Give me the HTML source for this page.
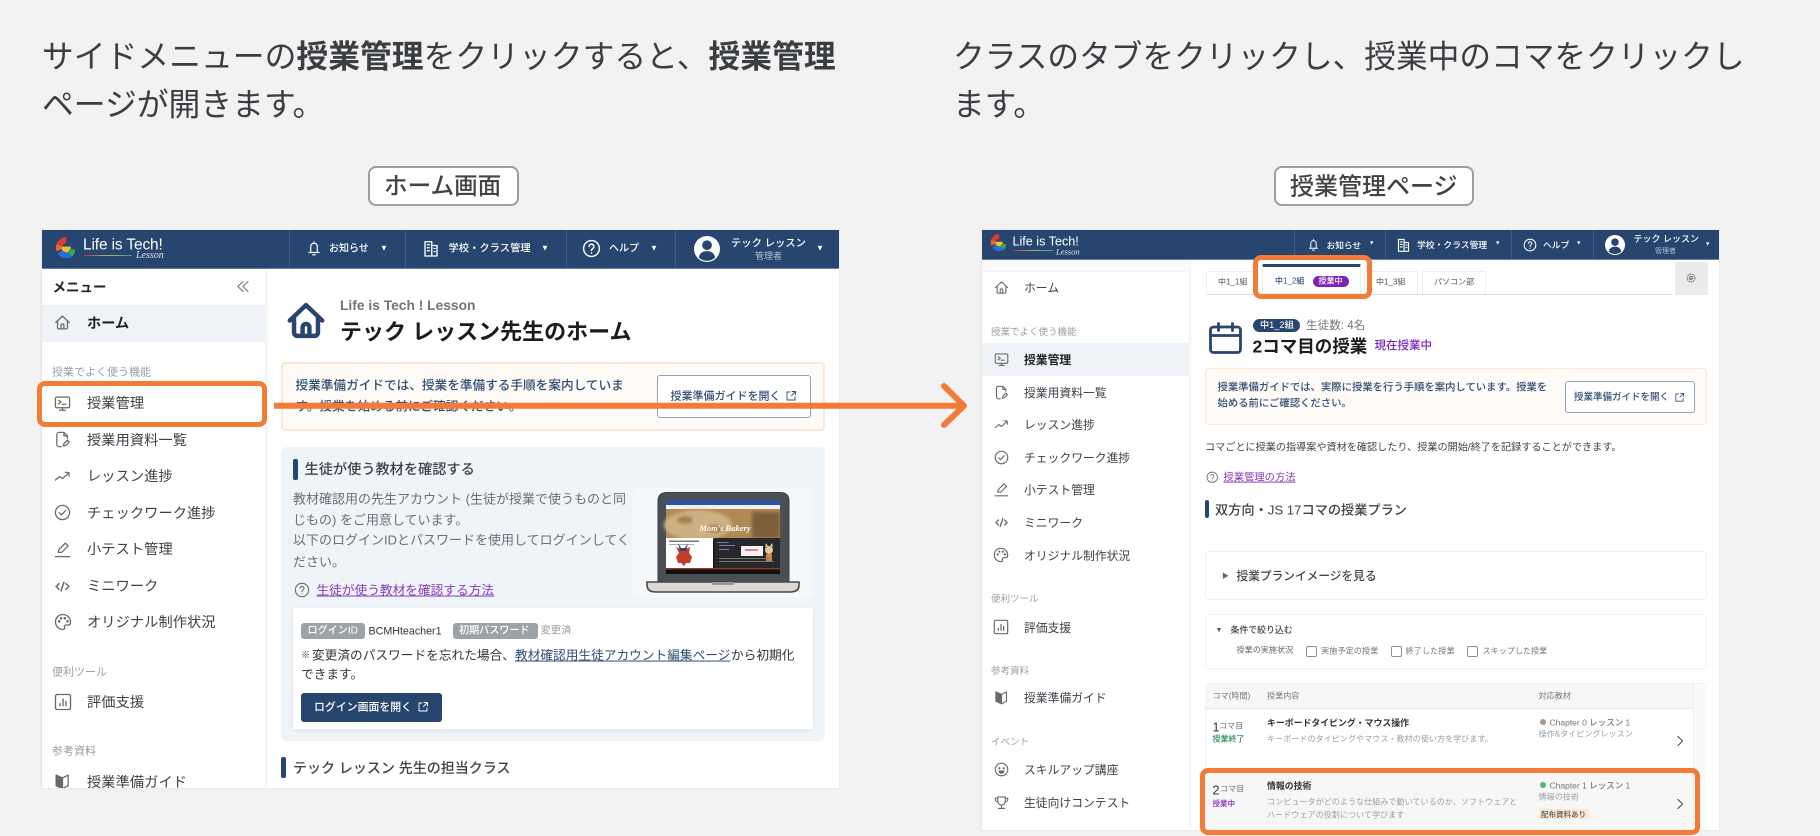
<!DOCTYPE html>
<html lang="ja"><head><meta charset="utf-8"><title>授業管理</title>
<style>
html,body{margin:0;padding:0}
body{width:1820px;height:836px;overflow:hidden;background:#f2f2f2;position:relative;font-family:"Liberation Sans","Noto Sans CJK JP",sans-serif;color:#333}
.t{position:absolute;white-space:nowrap;line-height:1;transform:translateY(calc(-50% + .07em))}
.b{position:absolute;box-sizing:border-box}
.clip{position:absolute;left:0;top:0;width:1820px;overflow:hidden}
b{font-weight:700}
svg.i{position:absolute;overflow:visible;fill:none;stroke:currentColor;stroke-width:1.8;stroke-linecap:round;stroke-linejoin:round}
.wh{color:#fff;font-weight:500}
.l{font-size:14.2px;color:#3c4148;letter-spacing:.1px}
.s{font-size:11px;color:#9a9ea3}
.r{font-size:11.8px;color:#3c4148}
.rs{font-size:9.5px;color:#9a9ea3}
.sep{position:absolute;width:1px;background:#3f5c84}
.or{position:absolute;box-sizing:border-box;border:5.5px solid #f47a38;border-radius:8px}
.nv{background:#27466f}
.ic{color:#666b70}
.g8{font-size:8.1px;color:#9a9ea3}
</style></head><body>
<svg width="0" height="0" style="position:absolute"><defs>
<symbol id="home" viewBox="0 0 24 24"><path d="M2.5 12 12 3l9.5 9M5 10v9a2 2 0 0 0 2 2h10a2 2 0 0 0 2-2v-9M10 21v-5a2 2 0 0 1 4 0v5"/></symbol>
<symbol id="mon" viewBox="0 0 24 24"><rect x="2" y="3" width="20" height="15" rx="2"/><path d="M6.5 7.5 10 10l-3.5 2.5M11.5 13h5M12 18v3M8 21.5h8"/></symbol>
<symbol id="file" viewBox="0 0 24 24"><path d="M10 22H7a3 3 0 0 1-3-3V5a3 3 0 0 1 3-3h7l5 5v3M14 2v5h5M13 21l1-3 5-5 2.5 2.5-5 5z"/></symbol>
<symbol id="trend" viewBox="0 0 24 24"><path d="M2 17l6-5 4 3 9-8M16 6l5 .5.5 5"/></symbol>
<symbol id="chk" viewBox="0 0 24 24"><circle cx="12" cy="12" r="10"/><path d="M7.5 12.5l3 3 6-6.5"/></symbol>
<symbol id="pen" viewBox="0 0 24 24"><path d="M6 16l1-4L16 3l4 4-9 9zM2 22h20"/></symbol>
<symbol id="code" viewBox="0 0 24 24"><path d="M7 8 3 12l4 4M17 8l4 4-4 4M14 6l-4 12"/></symbol>
<symbol id="pal" viewBox="0 0 24 24"><path d="M12 2C6 2 2 6.500 2 12c0 5.500 4.500 10 10 10 2 0 2.500-1.500 2-3-.6-1.800.5-3 2-3h3c2 0 3-1.500 3-4 0-5.500-4.500-10-10-10z"/><circle cx="7" cy="11" r=".8"/><circle cx="9.500" cy="7" r=".8"/><circle cx="14.500" cy="7" r=".8"/><circle cx="18" cy="11" r=".8"/></symbol>
<symbol id="bar" viewBox="0 0 24 24"><rect x="2" y="2" width="20" height="20" rx="2"/><path d="M8 17v-3M12 17V8M16 17v-6"/></symbol>
<symbol id="book" viewBox="0 0 24 24"><path fill="currentColor" d="M3 3l9 4v15l-9-4z"/><path d="M12 7l8-4v15l-8 4"/></symbol>
<symbol id="smile" viewBox="0 0 24 24"><circle cx="12" cy="12" r="10"/><circle cx="8.500" cy="10" r=".9" fill="currentColor"/><circle cx="15.500" cy="10" r=".9" fill="currentColor"/><path d="M8 14.500h8c-.5 2.500-2 3.500-4 3.500s-3.500-1-4-3.500z" fill="currentColor"/></symbol>
<symbol id="cup" viewBox="0 0 24 24"><path d="M6 3h12v7a6 6 0 0 1-12 0zM6 5H2v2a4 4 0 0 0 4 4M18 5h4v2a4 4 0 0 1-4 4M12 16v4M7 21.500h10"/></symbol>
<symbol id="bell" viewBox="0 0 24 24"><path d="M12 2v2M7 18V9a5 5 0 0 1 10 0v9M4.500 18h15M10 21.500h4"/></symbol>
<symbol id="bld" viewBox="0 0 24 24"><path d="M4 3h9v19H4zM13 8h7v14h-7zM7 7h3M7 11h3M7 15h3M16 12h1.500M16 16h1.500"/></symbol>
<symbol id="q" viewBox="0 0 24 24"><circle cx="12" cy="12" r="10"/><path d="M9 9.500a3 3 0 1 1 4.500 2.600c-1 .6-1.500 1.200-1.500 2.400M12 17.500v.2"/></symbol>
<symbol id="ext" viewBox="0 0 24 24"><path d="M10 4H4v16h16v-6M14 3h7v7M21 3l-8 8"/></symbol>
<symbol id="user" viewBox="0 0 24 24"><circle cx="12" cy="12" r="12" fill="#fff" stroke="none"/><circle cx="12" cy="8.500" r="4.500" fill="#27466f" stroke="none"/><path d="M4.500 20c.5-4 3.500-6 7.500-6s7 2 7.500 6a11 11 0 0 1-15 0z" fill="#27466f" stroke="none"/></symbol>
<symbol id="logo" viewBox="0 0 24 24"><g fill="none" stroke-width="7" stroke-linecap="butt"><path d="M5 9.500A8.500 8.500 0 0 1 13 3.500" stroke="#e23a2e"/><path d="M5 15a8.500 8.500 0 0 1 0-5.500" stroke="#e9672c"/><path d="M8 14.500h10" stroke="#f6c12d"/><path d="M19.500 14a8.500 8.500 0 0 1-2.500 6" stroke="#3aa655"/><path d="M17 20a8.500 8.500 0 0 1-11-3" stroke="#2a6fd6"/></g></symbol>
</defs></svg>

<div class="t" style="left:42px;top:55px;font-size:31.8px;color:#3a3d42">サイドメニューの<b>授業管理</b>をクリックすると、<b>授業管理</b></div>
<div class="t" style="left:42px;top:103px;font-size:31.8px;color:#3a3d42">ページが開きます。</div>
<div class="t" style="left:953px;top:55px;font-size:31.7px;color:#3a3d42">クラスのタブをクリックし、授業中のコマをクリックし</div>
<div class="t" style="left:953px;top:103px;font-size:31.7px;color:#3a3d42">ます。</div>

<div class="b" style="left:368px;top:166px;width:151px;height:40px;background:#fff;border:2px solid #9a9da3;border-radius:8px"></div>
<div class="t" style="left:384px;top:186px;font-size:23.6px;font-weight:500;color:#444">ホーム画面</div>
<div class="b" style="left:1274px;top:166px;width:200px;height:40px;background:#fff;border:2px solid #9a9da3;border-radius:8px"></div>
<div class="t" style="left:1290px;top:186px;font-size:24px;font-weight:500;color:#444">授業管理ページ</div>

<!-- LEFT PANEL -->
<div class="b" style="left:41px;top:229px;width:799px;height:560px;background:#ebebeb"></div>
<div class="clip" style="height:788px">
<div class="b" style="left:42px;top:230px;width:797px;height:558px;background:#fff"></div>
<div class="b nv" style="left:42px;top:230px;width:797px;height:39px;border-bottom:1px solid #6a83a4"></div>
<div class="sep" style="left:289px;top:230px;height:38px"></div><div class="sep" style="left:405px;top:230px;height:38px"></div><div class="sep" style="left:566px;top:230px;height:38px"></div><div class="sep" style="left:675px;top:230px;height:38px"></div>
<svg class="i" style="left:55px;top:237px;width:21px;height:21px"><use href="#logo"/></svg>
<div class="t" style="left:83px;top:244px;font-size:15.400px;color:#fff;font-weight:400;letter-spacing:-.1px">Life is Tech!</div>
<div class="b" style="left:84px;top:255px;width:48px;height:1px;background:linear-gradient(90deg,#b33,#aa8,#3a7)"></div>
<div class="t" style="left:136px;top:255px;font:italic 10px 'Liberation Serif',serif;color:#dfe5ee">Lesson</div>
<svg class="i" style="left:306px;top:240px;width:16px;height:17px;color:#fff"><use href="#bell"/></svg>
<div class="t wh" style="left:329px;top:249px;font-size:10px">お知らせ</div><div class="t" style="left:380px;top:248px;font-size:8px;color:#fff">▼</div>
<svg class="i" style="left:422px;top:239px;width:18px;height:19px;color:#fff"><use href="#bld"/></svg>
<div class="t wh" style="left:448.500px;top:249px;font-size:10.300px">学校・クラス管理</div><div class="t" style="left:541px;top:248px;font-size:8px;color:#fff">▼</div>
<svg class="i" style="left:582px;top:239px;width:19px;height:19px;color:#fff"><use href="#q"/></svg>
<div class="t wh" style="left:609px;top:249px;font-size:10px">ヘルプ</div><div class="t" style="left:650px;top:248px;font-size:8px;color:#fff">▼</div>
<svg class="i" style="left:694px;top:236px;width:26px;height:26px"><use href="#user"/></svg>
<div class="t wh" style="left:731px;top:243.500px;font-size:10.300px">テック レッスン</div>
<div class="t" style="left:755px;top:256px;font-size:9px;color:#b5c2d3">管理者</div><div class="t" style="left:816px;top:248px;font-size:8px;color:#fff">▼</div>

<div class="b" style="left:42px;top:269px;width:223px;height:519px;background:#fff;box-shadow:1px 0 5px rgba(0,0,0,.09)"></div>
<div class="t" style="left:52.500px;top:287px;font-size:13.500px;font-weight:700;color:#222">メニュー</div>
<svg class="i" style="left:237px;top:281px;width:12px;height:11px;color:#777;stroke-width:1.2" viewBox="0 0 12 11"><path d="M6 .5 1 5.500l5 5M11 .5 6 5.500l5 5"/></svg>
<div class="b" style="left:42px;top:305px;width:223px;height:37px;background:#eff3f8"></div>
<svg class="i ic" style="left:54px;top:314px;width:17px;height:17px"><use href="#home"/></svg>
<div class="t" style="left:87px;top:323px;font-size:14.200px;font-weight:700;color:#222">ホーム</div>
<div class="t s" style="left:52px;top:372px">授業でよく使う機能</div>
<svg class="i ic" style="left:54px;top:395px;width:17px;height:17px"><use href="#mon"/></svg><div class="t l" style="left:87px;top:403px">授業管理</div>
<svg class="i ic" style="left:54px;top:431px;width:17px;height:17px"><use href="#file"/></svg><div class="t l" style="left:87px;top:439.500px">授業用資料一覧</div>
<svg class="i ic" style="left:54px;top:468px;width:17px;height:17px"><use href="#trend"/></svg><div class="t l" style="left:87px;top:476px">レッスン進捗</div>
<svg class="i ic" style="left:54px;top:504px;width:17px;height:17px"><use href="#chk"/></svg><div class="t l" style="left:87px;top:513px">チェックワーク進捗</div>
<svg class="i ic" style="left:54px;top:541px;width:17px;height:17px"><use href="#pen"/></svg><div class="t l" style="left:87px;top:549px">小テスト管理</div>
<svg class="i ic" style="left:54px;top:578px;width:17px;height:17px;stroke-width:2.200"><use href="#code"/></svg><div class="t l" style="left:87px;top:586px">ミニワーク</div>
<svg class="i ic" style="left:54px;top:613px;width:18px;height:18px"><use href="#pal"/></svg><div class="t l" style="left:87px;top:622px">オリジナル制作状況</div>
<div class="t s" style="left:52px;top:672px">便利ツール</div>
<svg class="i ic" style="left:54px;top:693px;width:18px;height:18px"><use href="#bar"/></svg><div class="t l" style="left:87px;top:702px">評価支援</div>
<div class="t s" style="left:52px;top:751px">参考資料</div>
<svg class="i ic" style="left:54px;top:773px;width:17px;height:17px"><use href="#book"/></svg><div class="t l" style="left:87px;top:782px">授業準備ガイド</div>

<svg class="i" style="left:285px;top:300px;width:42px;height:41px;color:#27466f;stroke-width:2.600"><use href="#home"/></svg>
<div class="t" style="left:340px;top:305px;font-size:13.800px;font-weight:700;color:#6f747b">Life is Tech ! Lesson</div>
<div class="t" style="left:340px;top:331px;font-size:22px;font-weight:700;color:#1c1c1c">テック レッスン先生のホーム</div>

<div class="b" style="left:281px;top:362px;width:544px;height:69px;background:#fefaf5;border:2px solid #fce7d2;border-radius:4px"></div>
<div class="t" style="left:295.500px;top:385px;font-size:12.650px;font-weight:500;color:#2f4d76">授業準備ガイドでは、授業を準備する手順を案内していま</div>
<div class="t" style="left:295.500px;top:406px;font-size:12.650px;font-weight:500;color:#2f4d76">す。授業を始める前にご確認ください。</div>
<div class="b" style="left:657px;top:375px;width:154px;height:43px;background:#fff;border:1px solid #94a3b8;border-radius:3px"></div>
<div class="t" style="left:670.500px;top:396px;font-size:11px;font-weight:500;color:#2f4d76">授業準備ガイドを開く</div>
<svg class="i" style="left:785px;top:390px;width:12px;height:12px;color:#2f4d76"><use href="#ext"/></svg>

<div class="b" style="left:281px;top:447px;width:544px;height:294px;background:#eff4f9;border-radius:6px"></div>
<div class="b nv" style="left:293px;top:459px;width:5px;height:21px;border-radius:2px"></div>
<div class="t" style="left:304.500px;top:469px;font-size:14.200px;font-weight:500;color:#3d4249">生徒が使う教材を確認する</div>
<div class="t" style="left:293px;top:498px;font-size:13px;color:#6a6f76">教材確認用の先生アカウント (生徒が授業で使うものと同</div>
<div class="t" style="left:293px;top:518.500px;font-size:13px;color:#6a6f76">じもの) をご用意しています。</div>
<div class="t" style="left:293px;top:539px;font-size:13px;color:#6a6f76">以下のログインIDとパスワードを使用してログインしてく</div>
<div class="t" style="left:293px;top:561px;font-size:13px;color:#6a6f76">ださい。</div>
<svg class="i" style="left:294px;top:582px;width:16px;height:16px;color:#666b70;stroke-width:1.600"><use href="#q"/></svg>
<div class="t" style="left:316.500px;top:590px;font-size:12.700px;color:#8a3ab9;text-decoration:underline">生徒が使う教材を確認する方法</div>

<div class="b" style="left:632.500px;top:488px;width:180.500px;height:110px;background:#f5f8fb;border-radius:4px"></div>
<svg style="position:absolute;left:640px;top:485px" width="170" height="115" viewBox="0 0 170 115">
<defs><filter id="bl"><feGaussianBlur stdDeviation="1.600"/></filter></defs>
<path d="M18 16Q18 7.500 27 7.500H140Q149 7.500 149 16V97H18z" fill="#4a4f55" stroke="#3a3e44" stroke-width="1"/>
<rect x="26" y="15.500" width="114" height="73.500" fill="#111"/>
<rect x="26" y="15.500" width="114" height="4.500" fill="#2a55a8"/><rect x="26" y="20" width="114" height="4" fill="#eef0f3"/>
<rect x="26" y="24" width="114" height="29" fill="#b08a55"/><g filter="url(#bl)"><ellipse cx="58" cy="40" rx="34" ry="15" fill="#cdb183"/><rect x="112" y="27" width="28" height="26" fill="#7d5f3a"/><ellipse cx="45" cy="35" rx="8" ry="4" fill="#a77f4c"/><ellipse cx="75" cy="44" rx="8" ry="4" fill="#a77f4c"/></g>
<text x="85" y="46" font-family="Liberation Serif,serif" font-style="italic" font-weight="700" font-size="8.500" fill="#fff" text-anchor="middle">Mom's Bakery</text>
<rect x="26" y="53" width="47" height="30" fill="#fff"/><rect x="74" y="53" width="66" height="30" fill="#26282c"/>
<rect x="29" y="55.500" width="30" height="1.500" fill="#777"/><rect x="29" y="59" width="25" height="1" fill="#aaa"/>
<path d="M36 62l4 2h6l4-2-1 6 3 4-2 6h-4l-2 3-3-3h-3l-2-6 3-4z" fill="#c43b2c"/><path d="M38 58l3 5h4l3-5-2 8h-6z" fill="#2d4570"/>
<rect x="101" y="61" width="22" height="10" fill="#f5f0f2"/><rect x="105" y="64" width="13" height="2" fill="#d9849a"/>
<circle cx="129" cy="65" r="4" fill="#e8c79a"/><path d="M125 62l1-4 2 3M133 62l-1-4-2 3" fill="#e8c79a"/><rect x="126" y="69" width="6" height="8" fill="#c98a3a"/>
<rect x="77" y="57" width="12" height="1" fill="#6f7fb5"/><rect x="79" y="60" width="16" height="1" fill="#8c6fb5"/><rect x="79" y="64" width="10" height="1" fill="#6f7fb5"/><rect x="79" y="73" width="50" height="1" fill="#777"/><rect x="79" y="76" width="55" height="1" fill="#777"/>
<rect x="26" y="83" width="114" height="1.500" fill="#8c3a20"/>
<path d="M7 97H159V100Q159 107 150 107H16Q7 107 7 100z" fill="#dcd8d3" stroke="#44484e" stroke-width="1.600"/>
<rect x="72" y="97" width="22" height="3" rx="1" fill="#999"/>
</svg>

<div class="b" style="left:293px;top:608px;width:520px;height:121px;background:#fff;box-shadow:0 1px 5px rgba(0,0,0,.07)"></div>
<div class="b" style="left:301px;top:623px;width:64px;height:16px;background:#9ca3a8;border-radius:3px"></div>
<div class="t" style="left:307.500px;top:631px;font-size:10.100px;font-weight:500;color:#fff">ログインID</div>
<div class="t" style="left:368.500px;top:631px;font-size:10.700px;color:#333">BCMHteacher1</div>
<div class="b" style="left:452.500px;top:623px;width:85px;height:16px;background:#9ca3a8;border-radius:3px"></div>
<div class="t" style="left:459px;top:631px;font-size:10.100px;font-weight:500;color:#fff">初期パスワード</div>
<div class="t" style="left:540.500px;top:631px;font-size:10.300px;color:#9a9ea3">変更済</div>
<div class="t" style="left:301px;top:654.500px;font-size:9px;color:#333">※</div>
<div class="t" style="left:312px;top:654.500px;font-size:12.700px;color:#333">変更済のパスワードを忘れた場合、<span style="position:absolute;left:203px;color:#2f4d76;text-decoration:underline">教材確認用生徒アカウント編集ページ</span><span style="position:absolute;left:419px">から初期化</span></div>
<div class="t" style="left:301px;top:674px;font-size:12.700px;color:#333">できます。</div>
<div class="b nv" style="left:301px;top:693px;width:141px;height:29px;border-radius:3px"></div>
<div class="t" style="left:314px;top:707px;font-size:10.900px;font-weight:500;color:#fff">ログイン画面を開く</div>
<svg class="i" style="left:417px;top:701px;width:12px;height:12px;color:#fff"><use href="#ext"/></svg>

<div class="b nv" style="left:281px;top:757px;width:5px;height:21px;border-radius:2px"></div>
<div class="t" style="left:293px;top:767px;font-size:14px;font-weight:500;color:#3d4249">テック レッスン 先生の担当クラス</div>
</div>

<!-- RIGHT PANEL -->
<div class="b" style="left:981px;top:229px;width:739px;height:602px;background:#ebebeb"></div>
<div class="clip" style="height:830px">
<div class="b" style="left:982px;top:230px;width:737px;height:600px;background:#fff"></div>
<div class="b nv" style="left:982px;top:230px;width:737px;height:30px;border-bottom:1px solid #6a83a4"></div>
<div class="sep" style="left:1294px;top:230px;height:29px"></div><div class="sep" style="left:1385px;top:230px;height:29px"></div><div class="sep" style="left:1511px;top:230px;height:29px"></div><div class="sep" style="left:1593px;top:230px;height:29px"></div>
<svg class="i" style="left:990px;top:234px;width:17px;height:17px"><use href="#logo"/></svg>
<div class="t" style="left:1012.500px;top:240.500px;font-size:12.600px;color:#fff">Life is Tech!</div>
<div class="b" style="left:1013px;top:250px;width:40px;height:1px;background:linear-gradient(90deg,#b33,#aa8,#3a7)"></div>
<div class="t" style="left:1056px;top:250.500px;font:italic 8.500px 'Liberation Serif',serif;color:#dfe5ee">Lesson</div>
<svg class="i" style="left:1307px;top:238px;width:13px;height:14px;color:#fff"><use href="#bell"/></svg>
<div class="t wh" style="left:1326.500px;top:244.500px;font-size:8.700px">お知らせ</div><div class="t" style="left:1369px;top:244px;font-size:5.500px;color:#fff">▼</div>
<svg class="i" style="left:1396px;top:237px;width:15px;height:16px;color:#fff"><use href="#bld"/></svg>
<div class="t wh" style="left:1417px;top:244.500px;font-size:8.800px">学校・クラス管理</div><div class="t" style="left:1495px;top:244px;font-size:5.500px;color:#fff">▼</div>
<svg class="i" style="left:1523px;top:238px;width:14px;height:14px;color:#fff"><use href="#q"/></svg>
<div class="t wh" style="left:1543px;top:244.500px;font-size:8.800px">ヘルプ</div><div class="t" style="left:1576px;top:244px;font-size:5.500px;color:#fff">▼</div>
<svg class="i" style="left:1605px;top:235px;width:20px;height:20px"><use href="#user"/></svg>
<div class="t wh" style="left:1633.500px;top:239px;font-size:9px">テック レッスン</div>
<div class="t" style="left:1655px;top:250.500px;font-size:7px;color:#b5c2d3">管理者</div><div class="t" style="left:1705px;top:244.500px;font-size:5.500px;color:#fff">▼</div>

<div class="b" style="left:982px;top:260px;width:207px;height:570px;background:#fff;box-shadow:1px 0 4px rgba(0,0,0,.08)"></div>
<div class="b" style="left:982px;top:260px;width:207px;height:12px;background:#fafafa;border-bottom:1px solid #f1f1f1"></div>
<svg class="i ic" style="left:994px;top:280px;width:15px;height:15px"><use href="#home"/></svg><div class="t r" style="left:1024px;top:287.500px">ホーム</div>
<div class="t rs" style="left:991px;top:332px">授業でよく使う機能</div>
<div class="b" style="left:982px;top:343px;width:207px;height:33px;background:#eff3f8"></div>
<svg class="i ic" style="left:994px;top:352px;width:15px;height:15px"><use href="#mon"/></svg><div class="t r" style="left:1024px;top:360px;font-weight:700;color:#222">授業管理</div>
<svg class="i ic" style="left:994px;top:385px;width:15px;height:15px"><use href="#file"/></svg><div class="t r" style="left:1024px;top:393px">授業用資料一覧</div>
<svg class="i ic" style="left:994px;top:417px;width:15px;height:15px"><use href="#trend"/></svg><div class="t r" style="left:1024px;top:425px">レッスン進捗</div>
<svg class="i ic" style="left:994px;top:450px;width:15px;height:15px"><use href="#chk"/></svg><div class="t r" style="left:1024px;top:457.500px">チェックワーク進捗</div>
<svg class="i ic" style="left:994px;top:482px;width:15px;height:15px"><use href="#pen"/></svg><div class="t r" style="left:1024px;top:490px">小テスト管理</div>
<svg class="i ic" style="left:994px;top:515px;width:15px;height:15px;stroke-width:2.200"><use href="#code"/></svg><div class="t r" style="left:1024px;top:522.500px">ミニワーク</div>
<svg class="i ic" style="left:993px;top:547px;width:16px;height:16px"><use href="#pal"/></svg><div class="t r" style="left:1024px;top:555.500px">オリジナル制作状況</div>
<div class="t rs" style="left:991px;top:599px">便利ツール</div>
<svg class="i ic" style="left:993px;top:619px;width:16px;height:16px"><use href="#bar"/></svg><div class="t r" style="left:1024px;top:627.500px">評価支援</div>
<div class="t rs" style="left:991px;top:671px">参考資料</div>
<svg class="i ic" style="left:994px;top:690px;width:15px;height:15px"><use href="#book"/></svg><div class="t r" style="left:1024px;top:698px">授業準備ガイド</div>
<div class="t rs" style="left:991px;top:742px">イベント</div>
<svg class="i ic" style="left:994px;top:762px;width:15px;height:15px"><use href="#smile"/></svg><div class="t r" style="left:1024px;top:770px">スキルアップ講座</div>
<svg class="i ic" style="left:994px;top:795px;width:15px;height:15px"><use href="#cup"/></svg><div class="t r" style="left:1024px;top:802.500px">生徒向けコンテスト</div>

<div class="b" style="left:1206px;top:294px;width:466px;height:1px;background:#dcdcdc"></div>
<div class="b" style="left:1206px;top:271px;width:51px;height:23px;border:1px solid #eee;border-bottom:0;border-radius:2px 2px 0 0"></div>
<div class="t" style="left:1218px;top:282px;font-size:8px;color:#555">中1_1組</div>
<div class="b" style="left:1262px;top:264px;width:99px;height:30px;background:#fff;border:1px solid #eee;border-top:3px solid #27466f;border-radius:2px 2px 0 0"></div>
<div class="t" style="left:1275px;top:281px;font-size:8px;color:#2f4d76;font-weight:500">中1_2組</div>
<div class="b" style="left:1312.500px;top:275.500px;width:36px;height:11px;background:#7e22b8;border-radius:6px"></div>
<div class="t" style="left:1318.500px;top:281px;font-size:8px;color:#fff;font-weight:500">授業中</div>
<div class="b" style="left:1364px;top:271px;width:54px;height:23px;border:1px solid #eee;border-bottom:0;border-radius:2px 2px 0 0"></div>
<div class="t" style="left:1376px;top:282px;font-size:8px;color:#555">中1_3組</div>
<div class="b" style="left:1422px;top:271px;width:64px;height:23px;border:1px solid #eee;border-bottom:0;border-radius:2px 2px 0 0"></div>
<div class="t" style="left:1434px;top:282px;font-size:8px;color:#555">パソコン部</div>
<div class="b" style="left:1675px;top:262px;width:33px;height:33px;background:#e9ebed;border-radius:2px 2px 0 0"></div>
<svg style="position:absolute;left:1686px;top:273px;width:10px;height:10px;fill:none;stroke:#777;stroke-width:1.500" viewBox="0 0 12 12"><circle cx="6" cy="6" r="1.800"/><circle cx="6" cy="6" r="4.600" stroke-dasharray="1.800 1"/></svg>

<svg class="i" style="left:1209px;top:321.500px;width:33px;height:32px;color:#27466f;stroke-width:2.800" viewBox="0 0 33 32"><rect x="1.500" y="5" width="30" height="25.500" rx="3"/><path d="M1.500 13.500h30M9.500 1.500v7M23.500 1.500v7"/></svg>
<div class="b nv" style="left:1252.500px;top:318.500px;width:47.500px;height:13px;border-radius:7px"></div>
<div class="t" style="left:1260px;top:325px;font-size:9.200px;font-weight:500;color:#fff">中1_2組</div>
<div class="t" style="left:1306px;top:325px;font-size:11.600px;color:#777">生徒数: 4名</div>
<div class="t" style="left:1252.500px;top:346px;font-size:17.500px;font-weight:700;color:#1c1c1c">2コマ目の授業</div>
<div class="t" style="left:1374.500px;top:346px;font-size:11.500px;font-weight:500;color:#7a22bc">現在授業中</div>

<div class="b" style="left:1205px;top:368px;width:502px;height:57px;background:#fefaf5;border:1.500px solid #fce7d2;border-radius:4px"></div>
<div class="t" style="left:1217.500px;top:388px;font-size:10.350px;font-weight:500;color:#2f4d76">授業準備ガイドでは、実際に授業を行う手順を案内しています。授業を</div>
<div class="t" style="left:1217.500px;top:404px;font-size:10.350px;font-weight:500;color:#2f4d76">始める前にご確認ください。</div>
<div class="b" style="left:1565px;top:381px;width:130px;height:32px;background:#fff;border:1px solid #94a3b8;border-radius:3px"></div>
<div class="t" style="left:1574px;top:396.500px;font-size:9.500px;font-weight:500;color:#2f4d76">授業準備ガイドを開く</div>
<svg class="i" style="left:1674px;top:391.500px;width:11px;height:11px;color:#2f4d76"><use href="#ext"/></svg>

<div class="t" style="left:1205px;top:447.500px;font-size:10.150px;color:#444">コマごとに授業の指導案や資材を確認したり、授業の開始/終了を記録することができます。</div>
<svg class="i" style="left:1205.500px;top:471px;width:12.500px;height:12.500px;color:#666b70;stroke-width:1.600"><use href="#q"/></svg>
<div class="t" style="left:1223.500px;top:477.500px;font-size:10.300px;color:#8a3ab9;text-decoration:underline">授業管理の方法</div>
<div class="b nv" style="left:1205px;top:500px;width:4px;height:18px;border-radius:2px"></div>
<div class="t" style="left:1215px;top:509px;font-size:13.200px;font-weight:500;color:#3d4249">双方向・JS 17コマの授業プラン</div>

<div class="b" style="left:1204.500px;top:551px;width:502.500px;height:49px;border:1px solid #eef0f2;border-radius:4px"></div>
<div class="t" style="left:1222px;top:576px;font-size:7px;color:#666">▶</div>
<div class="t" style="left:1236.500px;top:576px;font-size:11.700px;font-weight:500;color:#444">授業プランイメージを見る</div>
<div class="b" style="left:1204.500px;top:614px;width:502.500px;height:55px;border:1px solid #eef0f2;border-radius:4px"></div>
<div class="t" style="left:1215.500px;top:630px;font-size:7px;color:#555">▼</div>
<div class="t" style="left:1230.500px;top:630px;font-size:8.900px;font-weight:500;color:#444">条件で絞り込む</div>
<div class="t" style="left:1236.500px;top:650px;font-size:8.100px;color:#666">授業の実施状況</div>
<div class="b" style="left:1305.500px;top:645.500px;width:11px;height:11px;border:1px solid #8a9099;border-radius:2px"></div>
<div class="t" style="left:1321px;top:650.500px;font-size:8.200px;color:#777">実施予定の授業</div>
<div class="b" style="left:1390.500px;top:645.500px;width:11px;height:11px;border:1px solid #8a9099;border-radius:2px"></div>
<div class="t" style="left:1405.500px;top:650.500px;font-size:8.200px;color:#777">終了した授業</div>
<div class="b" style="left:1467px;top:645.500px;width:11px;height:11px;border:1px solid #8a9099;border-radius:2px"></div>
<div class="t" style="left:1482.500px;top:650.500px;font-size:8.100px;color:#777">スキップした授業</div>

<div class="b" style="left:1204.500px;top:683px;width:502.500px;height:147px;border:1px solid #eef0f2;border-bottom:0;border-radius:4px 4px 0 0;background:#fff"></div>
<div class="b" style="left:1205px;top:684px;width:488px;height:25px;background:#f7f7f8;border-bottom:1px solid #e8e8e8"></div>
<div class="b" style="left:1693px;top:684px;width:14px;height:146px;background:#fafafa;border-left:1px solid #ececec"></div>
<div class="t g8" style="left:1212.500px;top:696px;color:#777">コマ(時間)</div>
<div class="t g8" style="left:1267px;top:696px;color:#777">授業内容</div>
<div class="t g8" style="left:1538.500px;top:696px;color:#777">対応教材</div>

<div class="t" style="left:1212.500px;top:726.500px;font-size:12.500px;font-weight:500;color:#333">1</div><div class="t g8" style="left:1219px;top:725.500px;color:#777">コマ目</div>
<div class="t" style="left:1212.500px;top:739px;font-size:8px;font-weight:500;color:#2f8a5a">授業終了</div>
<div class="t" style="left:1267px;top:722.500px;font-size:8.900px;font-weight:700;color:#333">キーボードタイピング・マウス操作</div>
<div class="t g8" style="left:1267px;top:738.500px">キーボードのタイピングやマウス・教材の使い方を学びます。</div>
<div class="b" style="left:1539.500px;top:718.500px;width:6.500px;height:6.500px;border-radius:50%;background:#a79a8a"></div>
<div class="t" style="left:1549.500px;top:722px;font-size:8.500px;font-weight:500;color:#777">Chapter 0 レッスン 1</div>
<div class="t g8" style="left:1538.500px;top:733.500px">操作&amp;タイピングレッスン</div>
<svg class="i" style="left:1677px;top:736px;width:6px;height:10px;color:#555;stroke-width:1.200" viewBox="0 0 6 10"><path d="M1 .5 5.500 5 1 9.500"/></svg>

<div class="b" style="left:1205px;top:770px;width:488px;height:60px;background:#f7f7f8"></div>
<div class="t" style="left:1212.500px;top:790px;font-size:12.500px;font-weight:500;color:#333">2</div><div class="t g8" style="left:1220px;top:789px;color:#777">コマ目</div>
<div class="t" style="left:1212.500px;top:802.500px;font-size:7.500px;font-weight:500;color:#7a22bc">授業中</div>
<div class="t" style="left:1267px;top:786px;font-size:8.900px;font-weight:700;color:#333">情報の技術</div>
<div class="t g8" style="left:1267px;top:802px">コンピュータがどのような仕組みで動いているのか、ソフトウェアと</div>
<div class="t g8" style="left:1267px;top:815px">ハードウェアの役割について学びます</div>
<div class="b" style="left:1539.500px;top:781.500px;width:6.500px;height:6.500px;border-radius:50%;background:#4cbb6c"></div>
<div class="t" style="left:1549.500px;top:785px;font-size:8.500px;font-weight:500;color:#777">Chapter 1 レッスン 1</div>
<div class="t g8" style="left:1538.500px;top:797px">情報の技術</div>
<div class="b" style="left:1538.500px;top:809px;width:50.500px;height:9.500px;background:#fde8d2;border-radius:1px"></div>
<div class="t" style="left:1541px;top:814px;font-size:7.500px;font-weight:500;color:#555">配布資料あり</div>
<svg class="i" style="left:1677px;top:799px;width:6px;height:10px;color:#555;stroke-width:1.200" viewBox="0 0 6 10"><path d="M1 .5 5.500 5 1 9.500"/></svg>
</div>

<!-- orange highlights -->
<div class="or" style="left:37px;top:381px;width:230px;height:46px"></div>
<div class="or" style="left:1253px;top:255px;width:118.500px;height:44px"></div>
<div class="or" style="left:1199.500px;top:767.500px;width:500px;height:67.500px"></div>
<svg style="position:absolute;left:0;top:0;width:1820px;height:836px;pointer-events:none;fill:none;stroke:#f47a38;stroke-width:6;stroke-linecap:round;stroke-linejoin:round"><path stroke-linecap="butt" d="M274 405.700H963"/><path d="M944 386 964 405.700 944 425"/></svg>
</body></html>
